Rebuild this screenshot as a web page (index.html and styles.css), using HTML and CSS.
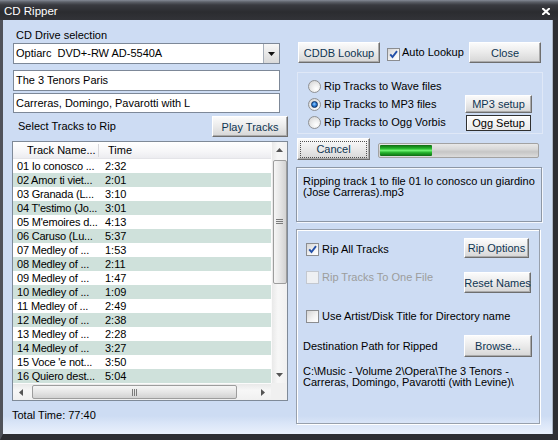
FILE: index.html
```html
<!DOCTYPE html>
<html>
<head>
<meta charset="utf-8">
<title>CD Ripper</title>
<link rel="stylesheet" href="styles.css">
</head>
<body>
<div class="window">
  <div class="titlebar">
    <span class="title">CD Ripper</span>
    <svg class="close" width="8" height="7" viewBox="0 0 8 7"><path d="M1 0.8 L7 6.2 M7 0.8 L1 6.2" stroke="#fff" stroke-width="2.1" stroke-linecap="square"/></svg>
  </div>
  <div class="frame">
    <div class="client">
      <div class="left">
        <div class="lbl-drive">CD Drive selection</div>
        <div class="combo">
          <div class="val">Optiarc&nbsp; DVD+-RW AD-5540A</div>
          <div class="dd"><svg width="7" height="4" viewBox="0 0 7 4"><path d="M0 0 H7 L3.5 4 Z" fill="#111"/></svg></div>
        </div>
        <div class="field field1">The 3 Tenors Paris</div>
        <div class="field field2">Carreras, Domingo, Pavarotti with L</div>
        <div class="selrow">
          <span class="lbl-sel">Select Tracks to Rip</span>
          <button class="btn btn-play">Play Tracks</button>
        </div>
        <div class="list">
          <div class="lv">
            <div class="lv-head">
              <div class="h1">Track Name...</div>
              <div class="h2">Time</div>
            </div>
            <div class="row"><span class="c1">01 Io conosco ...</span><span class="c2">2:32</span></div>
            <div class="row alt"><span class="c1">02 Amor ti viet...</span><span class="c2">2:01</span></div>
            <div class="row"><span class="c1">03 Granada (L...</span><span class="c2">3:10</span></div>
            <div class="row alt"><span class="c1">04 T'estimo (Jo...</span><span class="c2">3:01</span></div>
            <div class="row"><span class="c1">05 M'emoires d...</span><span class="c2">4:13</span></div>
            <div class="row alt"><span class="c1">06 Caruso (Lu...</span><span class="c2">5:37</span></div>
            <div class="row"><span class="c1">07 Medley of ...</span><span class="c2">1:53</span></div>
            <div class="row alt"><span class="c1">08 Medley of ...</span><span class="c2">2:11</span></div>
            <div class="row"><span class="c1">09 Medley of ...</span><span class="c2">1:47</span></div>
            <div class="row alt"><span class="c1">10 Medley of ...</span><span class="c2">1:09</span></div>
            <div class="row"><span class="c1">11 Medley of ...</span><span class="c2">2:49</span></div>
            <div class="row alt"><span class="c1">12 Medley of ...</span><span class="c2">2:38</span></div>
            <div class="row"><span class="c1">13 Medley of ...</span><span class="c2">2:28</span></div>
            <div class="row alt"><span class="c1">14 Medley of ...</span><span class="c2">3:27</span></div>
            <div class="row"><span class="c1">15 Voce 'e not...</span><span class="c2">3:50</span></div>
            <div class="row alt"><span class="c1">16 Quiero dest...</span><span class="c2">5:04</span></div>
          </div>
          <div class="vscroll">
            <div class="arr"><svg width="7" height="4" viewBox="0 0 7 4"><path d="M0 4 H7 L3.5 0 Z" fill="#555"/></svg></div>
            <div class="vtrack">
              <div class="vthumb"><svg width="7" height="6" viewBox="0 0 7 6"><path d="M0 0.5 H7 M0 2.5 H7 M0 4.5 H7" stroke="#7a7a7a" stroke-width="1"/></svg></div>
            </div>
            <div class="arr"><svg width="7" height="4" viewBox="0 0 7 4"><path d="M0 0 H7 L3.5 4 Z" fill="#555"/></svg></div>
          </div>
          <div class="hscroll">
            <div class="harr"><svg width="4" height="7" viewBox="0 0 4 7"><path d="M4 0 V7 L0 3.5 Z" fill="#555"/></svg></div>
            <div class="hthumb"><svg width="6" height="7" viewBox="0 0 6 7"><path d="M0.5 0 V7 M2.5 0 V7 M4.5 0 V7" stroke="#7a7a7a" stroke-width="1"/></svg></div>
            <div class="harr harr-r"><svg width="4" height="7" viewBox="0 0 4 7"><path d="M0 0 V7 L4 3.5 Z" fill="#555"/></svg></div>
          </div>
          <div class="corner"></div>
        </div>
        <div class="total">Total Time: 77:40</div>
      </div>

      <div class="right">
        <div class="toprow">
          <button class="btn btn-cddb">CDDB Lookup</button>
          <span class="chk chk-auto on"><svg width="11" height="11" viewBox="0 0 11 11"><path d="M2.2 5.4 L4.5 8 L9 2.2" fill="none" stroke="#2450a8" stroke-width="1.9"/></svg></span>
          <span class="lbl-auto">Auto Lookup</span>
          <button class="btn btn-close">Close</button>
        </div>

        <div class="radiogroup">
          <div class="radios">
            <div class="rrow"><span class="radio"></span><span>Rip Tracks to Wave files</span></div>
            <div class="rrow"><span class="radio on"><span class="dot"></span></span><span>Rip Tracks to MP3 files</span></div>
            <div class="rrow"><span class="radio"></span><span>Rip Tracks to Ogg Vorbis</span></div>
          </div>
          <div class="setup">
            <button class="btn btn-mp3">MP3 setup</button>
            <button class="btn-ogg">Ogg Setup</button>
          </div>
        </div>

        <div class="cancelrow">
          <button class="btn btn-cancel"><span class="focus">Cancel</span></button>
          <div class="progress"><div class="fill" style="width:52px"></div></div>
        </div>

        <div class="status">Ripping track 1 to file 01 Io conosco un giardino (Jose Carreras).mp3</div>

        <div class="options">
          <div class="orow orow1">
            <div class="ocell"><span class="chk on"><svg width="11" height="11" viewBox="0 0 11 11"><path d="M2.2 5.4 L4.5 8 L9 2.2" fill="none" stroke="#2450a8" stroke-width="1.9"/></svg></span><span>Rip All Tracks</span></div>
            <button class="btn btn-ripopt">Rip Options</button>
          </div>
          <div class="orow orow2">
            <div class="ocell ocell-top disabled"><span class="chk off"></span><span>Rip Tracks To One File</span></div>
            <button class="btn btn-reset">Reset Names</button>
          </div>
          <div class="orow orow3">
            <div class="ocell"><span class="chk"></span><span>Use Artist/Disk Title for Directory name</span></div>
          </div>
          <div class="orow orow4">
            <div class="dest">Destination Path for Ripped</div>
            <button class="btn btn-browse">Browse...</button>
          </div>
          <div class="path">C:\Music - Volume 2\Opera\The 3 Tenors - Carreras, Domingo, Pavarotti (with Levine)\</div>
        </div>
      </div>
    </div>
  </div>
</div>
</body>
</html>
```

FILE: styles.css
```css
* { box-sizing: border-box; }
html, body { margin: 0; padding: 0; }
body {
  width: 558px; height: 440px; overflow: hidden;
  font-family: "Liberation Sans", Arial, sans-serif;
  font-size: 11px; color: #000; background: #2e2f34;
}
.window { width: 558px; height: 440px; display: flex; flex-direction: column; }
.titlebar {
  height: 20px; flex: none; display: flex; align-items: center;
  padding: 2px 8px 0 4px; color: #fff;
  background: linear-gradient(#858a96 0, #5c6068 2px, #393a40 5px, #2b2c30 12px, #323338 20px);
}
.title { font-size: 11.5px; line-height: 14px; }
.close { margin-left: auto; margin-top: 0; }
.frame {
  flex: 1; display: flex;
  border-left: 3px solid #4f525a;
  border-right: 5px solid #2d2e33;
  border-bottom: 6px solid #2d2e33;
}
.client {
  flex: 1; display: flex; gap: 8px; padding-left: 9px;
  background: linear-gradient(#cddcf3 0, #cddcf3 396px, #dbe6f8 404px, #e9f0fc 414px);
  box-shadow: inset -1px 0 0 #aab4c4;
}

/* left column */
.left { width: 276px; display: flex; flex-direction: column; padding-top: 9px; }
.lbl-drive { height: 14px; line-height: 13px; padding-left: 4px; }
.combo {
  margin-left: 1px; width: 267px; height: 21px;
  border: 1px solid #7d8898; background: #fff; display: flex;
}
.combo .val { flex: 1; padding-left: 2px; line-height: 19px; white-space: nowrap; }
.combo .dd {
  width: 16px; border-left: 1px solid #a7afba;
  background: linear-gradient(#f7f7f7, #dadada);
  display: flex; align-items: center; justify-content: center;
}
.field {
  margin-left: 1px; width: 267px; height: 21px;
  border: 1px solid #7d8898; background: #fff;
  padding-left: 2px; line-height: 19px; white-space: nowrap;
}
.field1 { margin-top: 6px; }
.field2 { margin-top: 2px; height: 20px; line-height: 18px; }
.selrow { margin-top: 2px; height: 22px; display: flex; align-items: flex-end; justify-content: space-between; }
.lbl-sel { padding-left: 6px; line-height: 13px; margin-bottom: 4px; }

.btn {
  display: flex; align-items: center; justify-content: center;
  padding: 0; margin: 0; font: inherit; color: #0f3552; white-space: nowrap;
  border: 1px solid; border-color: #ffffff #6e6e6e #6e6e6e #ffffff;
  box-shadow: inset -1px -1px 0 #ababab;
  background: linear-gradient(#fbfbfb, #ececec 45%, #d6d6d6);
}
.btn-play { width: 76px; height: 21px; }

.list {
  margin-top: 4px; width: 276px; height: 260px;
  border: 1px solid #7f8a98; background: #fff;
  display: grid; grid-template-columns: 258px 16px; grid-template-rows: 241px 17px;
}
.lv { overflow: hidden; }
.lv-head {
  height: 17px; display: flex; align-items: center;
  background: linear-gradient(#ffffff, #f6f6f8 60%, #ececf0);
  border-bottom: 1px solid #e4e4e8;
}
.h1 { width: 86px; padding-left: 14px; line-height: 13px; border-right: 1px solid #d8d8dc; }
.h2 { padding-left: 9px; line-height: 13px; }
.row { height: 14px; display: flex; align-items: center; line-height: 14px; white-space: nowrap; }
.row.alt { background: #cfe1db; }
.c1 { width: 86px; flex: none; padding-left: 4px; letter-spacing: -0.2px; }
.c2 { padding-left: 6px; }

.vscroll {
  display: flex; flex-direction: column;
  background: linear-gradient(90deg, #e9e9e9, #f7f7f7 40%, #f0f0f0);
  border-left: 1px solid #fbfbfb;
}
.arr { height: 16px; display: flex; align-items: center; justify-content: center; }
.vtrack { flex: 1; padding-top: 2px; display: flex; flex-direction: column; align-items: center; }
.vthumb {
  width: 14px; height: 124px; border: 1px solid #9d9d9d; border-radius: 2px;
  background: linear-gradient(90deg, #f6f6f6, #e6e6e6 50%, #d2d2d2);
  display: flex; align-items: center; justify-content: center;
}
.hscroll {
  display: flex; align-items: center;
  background: linear-gradient(#e9e9e9, #f7f7f7 40%, #f0f0f0);
  border-top: 1px solid #fbfbfb;
}
.harr { width: 16px; height: 100%; display: flex; align-items: center; justify-content: center; }
.harr-r { margin-left: auto; }
.hthumb {
  margin-left: 3px; width: 205px; height: 14px; border: 1px solid #9d9d9d; border-radius: 2px;
  background: linear-gradient(#f6f6f6, #e6e6e6 50%, #d2d2d2);
  display: flex; align-items: center; justify-content: center;
}
.corner { background: #f0f0f0; }
.total { margin-top: 8px; line-height: 13px; }

/* right column */
.right { width: 247px; display: flex; flex-direction: column; padding-top: 22px; }
.toprow { height: 21px; display: flex; align-items: center; }
.btn-cddb { margin-left: 2px; width: 82px; height: 21px; }
.chk {
  width: 13px; height: 13px; flex: none;
  border: 1px solid #8b8d90;
  background: linear-gradient(135deg, #d4d4d4, #f4f4f4 60%, #ffffff);
  display: flex; align-items: center; justify-content: center;
}
.chk-auto { margin-left: 7px; margin-top: 4px; }
.chk.off { border-color: #c3c8d0; background: #eef0f3; }
.lbl-auto { margin-left: 2px; line-height: 13px; }
.btn-close { margin-left: auto; margin-right: 2px; width: 72px; height: 21px; }

.radiogroup {
  margin-top: 9px; margin-left: 1px; width: 246px; height: 62px;
  border: 1px solid #dfe8f7; display: flex; padding: 4px 0 0 10px;
}
.radios { display: flex; flex-direction: column; }
.rrow { height: 18px; display: flex; align-items: center; gap: 3px; white-space: nowrap; }
.radio {
  width: 13px; height: 13px; border-radius: 50%;
  border: 1px solid #8f9194;
  background: radial-gradient(circle at 65% 70%, #ffffff, #eeeeee 40%, #cfcfcf);
  display: flex; align-items: center; justify-content: center;
}
.radio .dot {
  width: 7px; height: 7px; border-radius: 50%;
  background: radial-gradient(circle at 45% 40%, #9fd0ff, #2c7fd8 45%, #0c3f8a);
  border: 1px solid #0d2e5f;
}
.setup { margin-left: auto; margin-right: 10px; padding-top: 18px; display: flex; flex-direction: column; align-items: center; }
.btn-mp3 { width: 67px; height: 18px; }
.btn-ogg {
  margin: 2px 0 0 0; padding: 0; width: 65px; height: 16px;
  font: inherit; color: #000; white-space: nowrap;
  border: 1px solid #303030; box-shadow: inset 1px 1px 0 #ffffff;
  background: linear-gradient(#fdfdfd, #eaeaea);
  display: flex; align-items: center; justify-content: center;
}

.cancelrow { margin-top: 4px; height: 22px; display: flex; align-items: flex-start; }
.btn-cancel { margin-left: 1px; width: 73px; height: 22px; }
.btn-cancel .focus {
  width: 67px; height: 17px; border: 1px dotted #505050;
  display: flex; align-items: center; justify-content: center;
}
.progress {
  margin-left: 8px; margin-top: 5px; width: 161px; height: 15px;
  border: 1px solid #a2a2a2; border-radius: 2px; padding: 1px;
  background: linear-gradient(#e8e8e8, #d8d8d8 40%, #c6c6c6 60%, #dcdcdc);
  display: flex;
}
.fill {
  height: 100%;
  background: linear-gradient(#0f6a12, #23b02a 30%, #6cf06f 50%, #23b02a 70%, #0f6a12);
  border-radius: 1px;
}

.status {
  margin-top: 7px; width: 246px; height: 55px;
  border: 1px solid #8d97a5; box-shadow: inset 1px 1px 0 #f4f7fd, 1px 1px 0 #f4f7fd;
  padding: 8px 4px 0 6px; line-height: 11px;
}

.options {
  margin-top: 7px; width: 244px; height: 195px;
  border: 1px solid #98a0ac; box-shadow: inset 1px 1px 0 #ffffff, 1px 1px 0 #ffffff;
  padding: 8px 5px 0 6px; display: flex; flex-direction: column;
}
.orow { display: grid; grid-template-columns: 161px 70px; align-items: center; }
.ocell { display: flex; align-items: center; gap: 3px; padding-left: 3px; line-height: 13px; white-space: nowrap; }
.ocell-top { align-self: start; margin-top: -1px; }
.disabled { color: #9c9c9c; }
.orow1 { height: 20px; }
.orow1 .ocell { margin-top: 2px; }
.btn-ripopt { width: 65px; height: 20px; }
.orow2 { margin-top: 14px; height: 21px; }
.btn-reset { width: 67px; height: 21px; }
.orow3 { margin-top: 17px; height: 13px; }
.orow4 { margin-top: 12px; height: 22px; }
.dest { line-height: 13px; }
.btn-browse { width: 68px; height: 22px; }
.path { margin-top: 9px; line-height: 11px; padding-right: 6px; }
```
